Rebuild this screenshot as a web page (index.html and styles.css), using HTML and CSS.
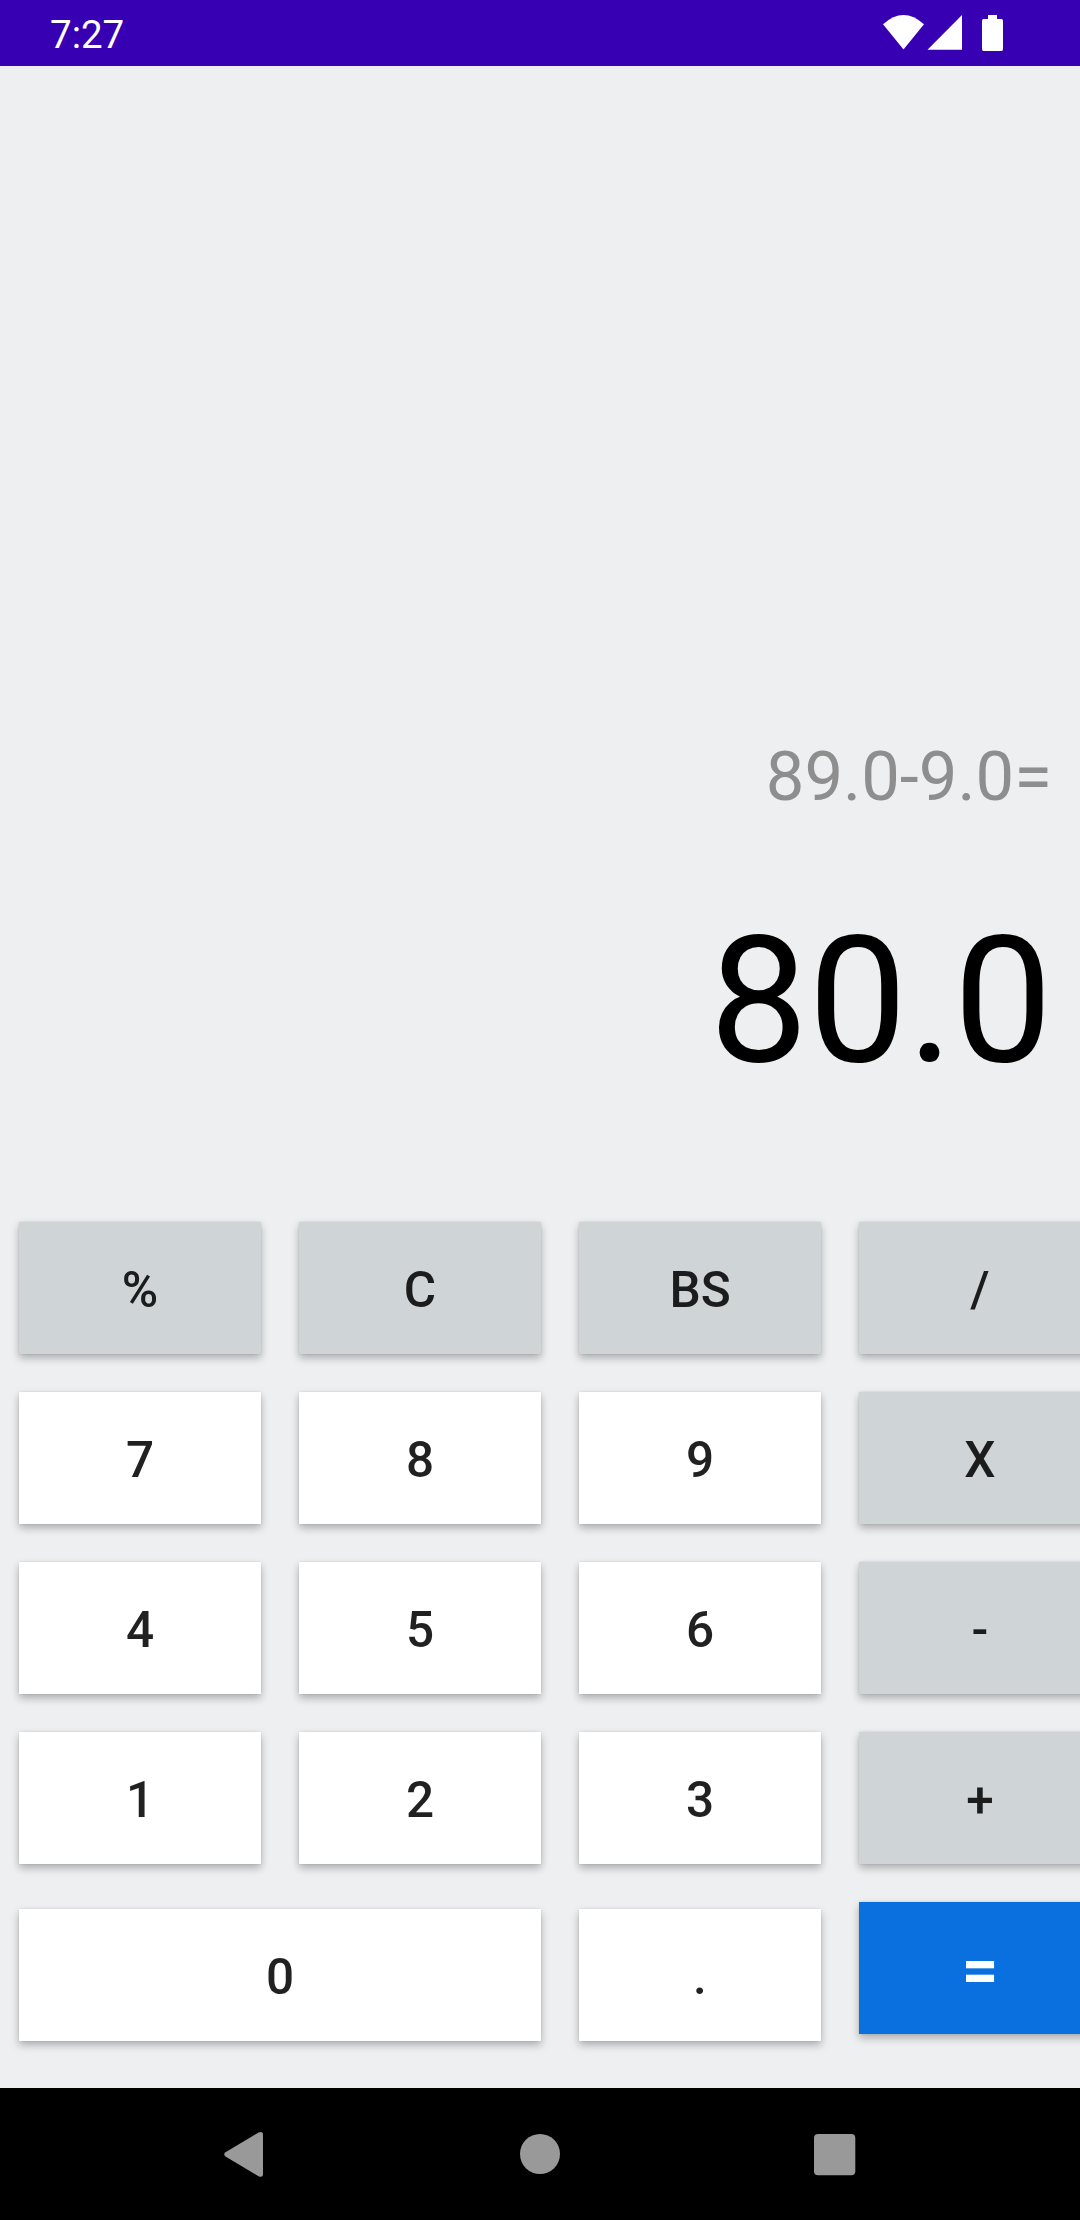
FILE: index.html
```html
<!DOCTYPE html>
<html lang="en">
<head>
<meta charset="utf-8">
<title>Calculator</title>
<link rel="stylesheet" href="styles.css">
</head>
<body>
<div class="screen">
  <header class="status">
    <span class="clock">7:27</span>
    <svg class="status-icons" width="124" height="66" viewBox="0 0 124 66" fill="#fff">
      <path d="M0 24.300Q20.500 5.700 41 24.300L20.500 49.500Z"/>
      <path d="M79 15V49.700H44.500Z"/>
      <path d="M105 15H114V19H118.500Q120 19 120 21V49Q120 51 118.500 51H100.500Q99 51 99 49V21Q99 19 100.500 19H105Z"/>
    </svg>
  </header>
  <main class="calculator">
    <div class="history">89.0-9.0=</div>
    <div class="result">80.0</div>
    <div class="keys">
      <button class="key util">%</button><button class="key util">C</button><button class="key util">BS</button><button class="key util">/</button>
      <button class="key">7</button><button class="key">8</button><button class="key">9</button><button class="key util">X</button>
      <button class="key">4</button><button class="key">5</button><button class="key">6</button><button class="key util">-</button>
      <button class="key">1</button><button class="key">2</button><button class="key">3</button><button class="key util">+</button>
      <button class="key wide low">0</button><button class="key low">.</button><button class="key equals">=</button>
    </div>
  </main>
  <nav class="navbar">
    <svg width="1080" height="132" viewBox="0 0 1080 132" fill="#999">
      <path d="M225.500 64.300L258.500 44.600Q263 42.500 263 47V86Q263 90 258.500 88.200L225.500 68.500Q223 66.400 225.500 64.300Z"/>
      <circle cx="540" cy="66" r="20"/>
      <rect x="814" y="46" width="41.300" height="41.300" rx="4"/>
    </svg>
  </nav>
</div>
</body>
</html>
```
FILE: styles.css
```css
body { margin: 0; }
.screen {
  width: 1080px;
  height: 2220px;
  overflow: hidden;
  display: flex;
  flex-direction: column;
  background: #eeeff1;
  font-family: Roboto, sans-serif;
}
.status {
  height: 66px;
  background: #3700b3;
  color: #fff;
  display: flex;
  justify-content: space-between;
  padding: 0 73px 0 50px;
}
.status-icons { margin-right: 0; }
.clock { font-size: 38.5px; line-height: 69px; }
.calculator { height: 2022px; display: flex; flex-direction: column; }
.history {
  margin-top: 664px;
  padding-right: 28px;
  height: 94px;
  font-size: 68.75px;
  line-height: 94px;
  text-align: right;
  color: #8e8e8e;
}
.result {
  padding-right: 27.5px;
  margin-top: 72px;
  height: 210px;
  font-size: 176px;
  line-height: 210px;
  text-align: right;
  color: #000;
}
.keys {
  margin: 116px 0 0 19px;
  width: 1082px;
  display: grid;
  grid-template-columns: repeat(4, 242px);
  grid-auto-rows: 132px;
  column-gap: 38px;
  row-gap: 38px;
}
.key {
  border: 0;
  padding: 4px 0 0;
  border-radius: 0;
  background: #fff;
  color: rgba(0, 0, 0, .87);
  font: 500 49.5px Roboto, sans-serif;
  box-shadow: 0 4px 8px rgba(0, 0, 0, .28), 0 0 2px rgba(0, 0, 0, .1);
}
.util { background: #cfd4d6; }
.wide { grid-column: span 2; }
.low { margin-top: 7px; height: 132px; }
.equals {
  padding-top: 5px;
  background: #0b70df;
  color: #fff;
  font-size: 64px;
  font-weight: 700;
}
.navbar { height: 132px; background: #000; }
.navbar svg { display: block; }
```
